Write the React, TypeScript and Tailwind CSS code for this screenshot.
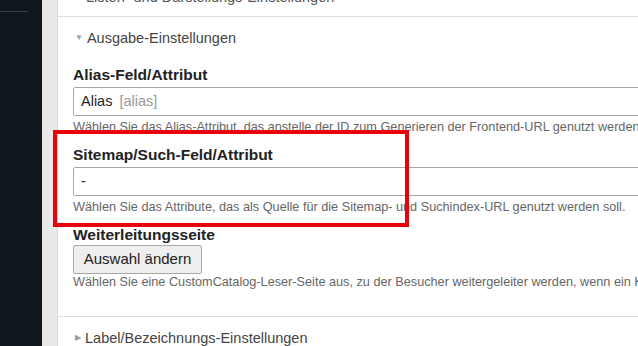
import React from 'react';

const font = { fontFamily: '"Liberation Sans", Arial, sans-serif' };

const Label = ({ children }: { children: React.ReactNode }) => (
  <div className="text-[15.5px] leading-[20px] font-bold text-[#222] whitespace-nowrap">{children}</div>
);

const Help = ({ children, className = '' }: { children: React.ReactNode; className?: string }) => (
  <div className={`text-[12.7px] leading-[16px] text-[#666] whitespace-nowrap ${className}`}>{children}</div>
);

export default function App() {
  return (
    <div className="relative flex h-[346px] w-[638px] overflow-hidden bg-white" style={font}>
      {/* dark sidebar */}
      <div className="w-[42px] shrink-0 bg-[#0f161e] pt-[11px]">
        <div className="h-px w-[28px] bg-[#3a4048]" />
      </div>
      <div className="w-[16px] shrink-0 bg-[#e9e9e9] border-r border-[#d8d8d8]" />

      {/* main panel */}
      <div className="flex-1 min-w-0 overflow-hidden">
        <div className="h-[17px] border-b border-[#dddddd] relative">
          <div className="absolute left-[28px] top-[-12px] text-[14.5px] leading-[18px] text-[#555] whitespace-nowrap">
            Listen- und Darstellungs-Einstellungen
          </div>
        </div>

        <div className="pl-[15px]">
          <div className="flex items-center gap-[4px] pt-[12px] h-[30px] pl-[2px]">
            <span className="text-[8px] text-[#999] leading-none">▼</span>
            <span className="text-[14.5px] leading-[18px] text-[#444]">Ausgabe-Einstellungen</span>
          </div>

          <div className="pt-[18px]">
            <Label>Alias-Feld/Attribut</Label>
            <div className="mt-[2px] h-[29px] border border-[#a8a8a8] rounded-[2px] flex items-center pl-[7px] text-[14.5px] -mr-[10px]">
              <span className="text-[#222]">Alias</span>
              <span className="ml-[7px] text-[#999]">[alias]</span>
            </div>
            <Help className="mt-[3px]">Wählen Sie das Alias-Attribut, das anstelle der ID zum Generieren der Frontend-URL genutzt werden soll.</Help>
          </div>

          <div className="pt-[10px]">
            <Label>Sitemap/Such-Feld/Attribut</Label>
            <div className="mt-[2px] h-[29px] border border-[#a8a8a8] rounded-[2px] flex items-center pl-[7px] text-[14.5px] text-[#222] -mr-[10px]">
              -
            </div>
            <Help className="mt-[3px]">Wählen Sie das Attribute, das als Quelle für die Sitemap- und Suchindex-URL genutzt werden soll.</Help>
          </div>

          <div className="pt-[10px]">
            <Label>Weiterleitungsseite</Label>
            <button className="block h-[29px] w-[129px] border border-[#a8a8a8] rounded-[2px] bg-[#eeeeee] text-[15px] text-[#222]">
              Auswahl ändern
            </button>
            <Help>Wählen Sie eine CustomCatalog-Leser-Seite aus, zu der Besucher weitergeleiter werden, wenn ein Katalogeintrag ausgewählt wird.</Help>
          </div>
        </div>

        <div className="mt-[26px] border-t border-[#dddddd]">
          <div className="flex items-center gap-[4px] pl-[17px] pt-[12px]">
            <span className="text-[8px] text-[#999] leading-none">▶</span>
            <span className="text-[14.5px] leading-[18px] text-[#444] whitespace-nowrap">Label/Bezeichnungs-Einstellungen</span>
          </div>
        </div>
      </div>

      {/* red highlight frame */}
      <div className="absolute left-[53px] top-[130px] w-[356px] h-[97px] border-[4px] border-[#e8000b]" />
    </div>
  );
}
